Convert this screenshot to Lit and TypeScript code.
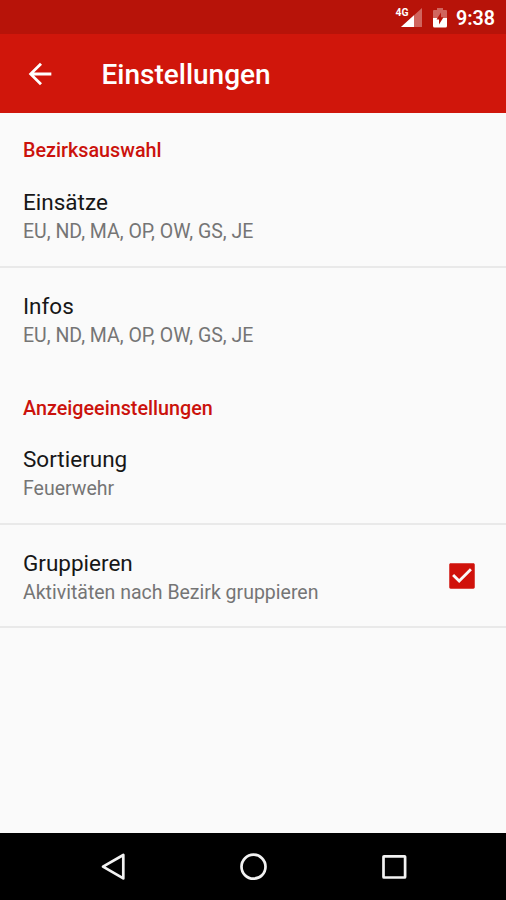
import { LitElement, html, css, svg } from "lit";
import { customElement, property } from "lit/decorators.js";

@customElement("pref-row")
class PrefRow extends LitElement {
  @property() heading = "";
  @property() summary = "";
  @property({ type: Boolean }) checked = false;

  static styles = css`
    :host {
      display: flex;
      align-items: center;
      justify-content: space-between;
      box-sizing: border-box;
      height: 103.3px;
      padding: 0 27.5px 0 23px;
    }
    .texts {
      display: flex;
      flex-direction: column;
      white-space: nowrap;
      padding-top: 3px;
    }
    .heading {
      font-size: 22.5px;
      line-height: 30px;
      color: #171717;
    }
    .summary {
      font-size: 19.5px;
      line-height: 29px;
      color: #757575;
    }
    .box {
      display: block;
      width: 34px;
      height: 34px;
      margin-top: 1px;
    }
  `;

  render() {
    return html`
      <div class="texts">
        <div class="heading">${this.heading}</div>
        <div class="summary">${this.summary}</div>
      </div>
      ${this.checked
        ? html`<svg class="box" viewBox="0 0 24 24">
            <path
              fill="#d0120b"
              d="M20 3H4c-.6 0-1 .4-1 1v16c0 .6.4 1 1 1h16c.6 0 1-.4 1-1V4c0-.6-.4-1-1-1zM10 17l-5-5 1.41-1.41L10 14.17l7.59-7.59L19 8l-9 9z"
            />
          </svg>`
        : null}
    `;
  }
}

@customElement("app-root")
class AppRoot extends LitElement {
  static styles = css`
    :host {
      display: flex;
      flex-direction: column;
      width: 506px;
      height: 900px;
      overflow: hidden;
      background: #fafafa;
      font-family: Roboto, sans-serif;
    }
    svg {
      display: block;
    }
    .status {
      flex: none;
      display: flex;
      justify-content: flex-end;
      box-sizing: border-box;
      height: 34px;
      padding: 0 11px 0 0;
      background: #b71309;
      color: #fff;
    }
    .clock {
      font-size: 19.7px;
      line-height: 37px;
      font-weight: 600;
      margin-left: 8px;
    }
    .net {
      font-family: Roboto, sans-serif;
      font-size: 10px;
      font-weight: 700;
    }
    .toolbar {
      flex: none;
      display: flex;
      align-items: center;
      box-sizing: border-box;
      height: 78.5px;
      padding: 0 23px;
      background: #d0160b;
      color: #fff;
    }
    .back {
      margin-top: 1px;
    }
    .title {
      margin-left: 44.5px;
      font-size: 28px;
      line-height: 34px;
      font-weight: 500;
      padding-top: 3px;
    }
    .list {
      flex: 1;
    }
    .category {
      box-sizing: border-box;
      height: 50.7px;
      padding: 24px 23px 0;
      font-size: 19.75px;
      line-height: 27px;
      font-weight: 500;
      color: #cb120c;
    }
    .category.first {
      height: 51.9px;
    }
    .line {
      border-bottom: 2px solid #e9e9e9;
    }
    .nav {
      flex: none;
      height: 67px;
      background: #000;
    }
  `;

  private signal() {
    return svg`
      <path d="M422 8V27H401Z" fill="#fff" fill-opacity="0.35" />
      <path d="M414 15.3V27H401Z" fill="#fff" />
      <rect x="395" y="7" width="14" height="9.5" fill="#b71309" />
      <text class="net" x="395.5" y="16" textLength="13" lengthAdjust="spacingAndGlyphs" fill="#fff">4G</text>
    `;
  }

  private battery() {
    return svg`
      <path d="M433 11Q433 10 434 10H437V8H443V10H446Q447 10 447 11V19H433Z" fill="#fff" fill-opacity="0.35" />
      <path d="M433 18H447V26Q447 27.5 445.5 27.5H434.5Q433 27.5 433 26Z" fill="#fff" />
      <path d="M441 12.5V17.3H443.5L439 24.5V19.5H436.5Z" fill="#b71309" />
    `;
  }

  render() {
    return html`
      <div class="status">
        <svg width="54" height="34" viewBox="394 0 54 34">${this.signal()}${this.battery()}</svg>
        <span class="clock">9:38</span>
      </div>
      <div class="toolbar">
        <svg class="back" width="34" height="34" viewBox="0 0 24 24">
          <path fill="#fff" d="M20 11H7.83l5.59-5.59L12 4l-8 8 8 8 1.41-1.41L7.83 13H20v-2z" />
        </svg>
        <div class="title">Einstellungen</div>
      </div>
      <div class="list">
        <div class="category first">Bezirksauswahl</div>
        <pref-row class="line" heading="Einsätze" summary="EU, ND, MA, OP, OW, GS, JE"></pref-row>
        <pref-row heading="Infos" summary="EU, ND, MA, OP, OW, GS, JE"></pref-row>
        <div class="category">Anzeigeeinstellungen</div>
        <pref-row class="line" heading="Sortierung" summary="Feuerwehr"></pref-row>
        <pref-row
          class="line"
          heading="Gruppieren"
          summary="Aktivitäten nach Bezirk gruppieren"
          checked
        ></pref-row>
      </div>
      <div class="nav">
        <svg width="506" height="67" viewBox="0 833 506 67" fill="none" stroke="#f2f2f2" stroke-width="2.7">
          <path d="M123.3 855V878.4L103 866.7Z" stroke-linejoin="round" />
          <circle cx="253.5" cy="866.7" r="12" />
          <rect x="383.5" y="856.3" width="21.6" height="21.2" rx="0.5" />
        </svg>
      </div>
    `;
  }
}
